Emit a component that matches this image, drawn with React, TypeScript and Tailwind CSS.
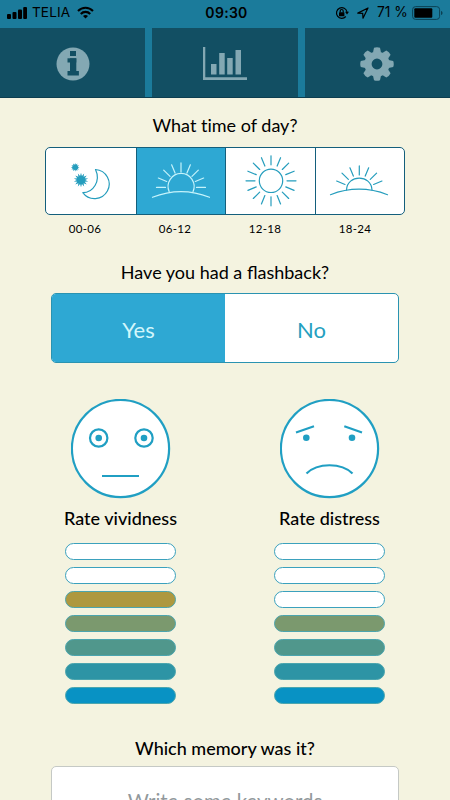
import React, { useState } from 'react';
import clsx from 'clsx';

const times = ['00-06', '06-12', '12-18', '18-24'];

// Fill colours of the rating bars, from the top down
const levels = [
  'bg-[#cf8a2d]',
  'bg-[#c19238]',
  'bg-[#ae983f]',
  'bg-[#7b996e]',
  'bg-[#50978c]',
  'bg-[#2d94a5]',
  'bg-[#0892c4]',
];

const rays = (count: number, step: number, start: number) =>
  Array.from({ length: count }, (_, i) => start + i * step);

const StatusBar = () => (
  <div className="grid h-7 grid-cols-3 items-start pt-[4px] font-['Inter','Liberation_Sans',sans-serif] text-[14px] leading-[17px] text-black">
    <div className="flex items-center pl-[7px]">
      <svg width="20" height="13" viewBox="0 0 20 13">
        <rect x="0" y="8" width="4" height="5" rx="1" />
        <rect x="5.5" y="6" width="4" height="7" rx="1" />
        <rect x="11" y="3.5" width="4" height="9.5" rx="1" />
        <rect x="16.2" y="1" width="3.8" height="12" rx="1" />
      </svg>
      <span className="ml-[5px] w-[39px] text-[13.6px] tracking-[0.1px]">TELIA</span>
      <svg className="ml-[6px]" width="17" height="13" viewBox="0 0 17 13" fill="none" stroke="black" strokeWidth="2.1">
        <path d="M1 5C5.2 .7 11.8 .7 16 5" />
        <path d="M3.8 8C6.4 5.2 10.6 5.2 13.2 8" />
        <path d="M8.5 12.5L6 10C7.4 8.6 9.6 8.6 11 10Z" fill="black" stroke="none" />
      </svg>
    </div>
    <div className="pl-[3px] text-center text-[14px] font-semibold tracking-[0.3px]">09:30</div>
    <div className="flex items-center justify-end pr-[6px]">
      <svg width="14" height="14" viewBox="0 0 14 14" fill="none" stroke="black" strokeWidth="1.2">
        <path d="M10.8 10.5A5.3 5.3 0 1 1 12 6" />
        <path d="M10 5.8h4l-2 2.6z" fill="black" stroke="none" />
        <rect x="4" y="6.2" width="5.4" height="4" rx=".5" fill="black" stroke="none" />
        <path d="M5.2 6.5V5a1.5 1.5 0 0 1 3 0v1.5" />
      </svg>
      <svg className="ml-[8px]" width="12" height="12" viewBox="0 0 12 12" fill="none" stroke="black" strokeWidth="1.2" strokeLinejoin="round">
        <path d="M.8 6.1L11 1L6 11.2L5.7 6.4Z" />
      </svg>
      <span className="ml-[8px] w-[31px] whitespace-nowrap text-[13.8px]">71 %</span>
      <svg className="ml-[4px]" width="32" height="14" viewBox="0 0 32 14">
        <rect x=".6" y=".6" width="27" height="12.8" rx="3" fill="none" stroke="#0b4053" />
        <rect x="2.3" y="2.3" width="18" height="9.4" rx="1" />
        <path d="M29 5c2 .6 2 3.4 0 4z" fill="#0b4053" />
      </svg>
    </div>
  </div>
);

const InfoIcon = () => (
  <svg width="34" height="34" viewBox="0 0 34 34" fill="currentColor">
    <circle cx="17" cy="17" r="16.5" />
    <g fill="#124f63">
      <rect x="14" y="4" width="6" height="5" />
      <rect x="11.5" y="11.3" width="8.8" height="4.2" />
      <rect x="14" y="11.3" width="6.3" height="14" />
      <rect x="11.5" y="24" width="11.4" height="4.5" />
    </g>
  </svg>
);

const ChartIcon = () => (
  <svg width="44" height="33" viewBox="0 0 44 33" fill="currentColor">
    <path d="M0 0h2.3v30.3H44V33H0z" />
    <rect x="8" y="17" width="5.5" height="10.5" />
    <rect x="16.2" y="6" width="5.5" height="21.5" />
    <rect x="24.2" y="11" width="5.5" height="16.5" />
    <rect x="32.5" y="3" width="5.5" height="24.5" />
  </svg>
);

const GearIcon = () => (
  <svg width="34" height="34" viewBox="-17 -17 34 34" fill="currentColor">
    <circle r="9" fill="none" stroke="currentColor" strokeWidth="7.2" />
    {rays(8, 45, 0).map((angle) => (
      <path key={angle} d="M-4 -11.5L-3 -16.2Q0 -17.3 3 -16.2L4 -11.5Z" transform={`rotate(${angle})`} />
    ))}
  </svg>
);

const star = (points: number, outer: number, inner: number) =>
  Array.from({ length: points * 2 }, (_, i) => {
    const r = i % 2 ? inner : outer;
    const a = (i * Math.PI) / points;
    return `${(r * Math.sin(a)).toFixed(2)},${(-r * Math.cos(a)).toFixed(2)}`;
  }).join(' ');

const TimeIcon = ({ index }: { index: number }) => (
  <svg className="shrink-0" width="89" height="66" viewBox="0 0 89 66" fill="none" stroke="currentColor" strokeWidth="1.2" strokeLinecap="round" strokeLinejoin="round">
    {index === 0 && (
      <>
        <polygon points={star(12, 4.3, 2.6)} transform="translate(29.2 19.3)" fill="currentColor" stroke="none" />
        <polygon points={star(14, 7.3, 4.2)} transform="translate(35 32)" fill="currentColor" stroke="none" />
        <path d="M49.5 21.5A14.6 14.6 0 1 1 36.8 44.7C47 44.7 55 33.2 49.5 21.5Z" />
      </>
    )}
    {index === 1 && (
      <>
        <path d="M16.5 49.3Q45 37.8 73.5 49.3" />
        <path d="M33.2 43.7A13 13 0 1 1 57 43.7" />
        {rays(9, 22.5, -90).map((angle) => (
          <path key={angle} d="M0 -15.5V-24.5" transform={`translate(45 39.4) rotate(${angle})`} />
        ))}
      </>
    )}
    {index === 2 && (
      <>
        <circle cx="45" cy="32.8" r="11.7" />
        {rays(16, 22.5, 0).map((angle) => (
          <path key={angle} d="M0 -16V-25" transform={`translate(45 32.8) rotate(${angle})`} />
        ))}
      </>
    )}
    {index === 3 && (
      <>
        <path d="M15.5 46.7Q44 35.7 72.5 46.7" />
        <path d="M31.5 42C32 26.2 56.5 26.2 57 42" />
        {rays(7, 22.5, -67.5).map((angle) => (
          <path key={angle} d="M0 -15.5V-24.5" transform={`translate(44.3 42.4) rotate(${angle})`} />
        ))}
      </>
    )}
  </svg>
);

const VividFace = () => (
  <svg width="100" height="100" viewBox="0 0 100 100" fill="none" stroke="#209fc3" strokeWidth="2.2">
    <circle cx="49.5" cy="49.5" r="48.6" fill="white" />
    <circle cx="27.7" cy="39" r="8.7" />
    <circle cx="73" cy="39" r="8.7" />
    <circle cx="27.7" cy="39" r="3.3" fill="#209fc3" stroke="none" />
    <circle cx="73" cy="39" r="3.3" fill="#209fc3" stroke="none" />
    <path d="M31 77H68" />
  </svg>
);

const SadFace = () => (
  <svg width="100" height="100" viewBox="0 0 100 100" fill="none" stroke="#209fc3" strokeWidth="2.2">
    <circle cx="49.5" cy="49.5" r="48.6" fill="white" />
    <path d="M16 33.5L34 27.2M64.3 27.2L82 33.5" />
    <circle cx="26.3" cy="38.8" r="3.3" fill="#209fc3" stroke="none" />
    <circle cx="72" cy="38.8" r="3.3" fill="#209fc3" stroke="none" />
    <path d="M26.5 74.5C37.5 63.5 61.5 63.5 72.5 74.5" />
  </svg>
);

interface IRating {
  title: string;
  face: React.ReactNode;
  initial: number;
}

const Rating = ({ title, face, initial }: IRating) => {
  const [value, setValue] = useState(initial);

  return (
    <div className="flex w-[112px] flex-col items-center">
      {face}
      <div className="mt-[7px] h-6 whitespace-nowrap text-[18px] leading-6 font-medium">{title}</div>
      <div className="mt-[13px] flex flex-col gap-[7px]">
        {levels.map((color, i) => (
          <button
            key={color}
            onClick={() => setValue(levels.length - i)}
            className={clsx(
              'h-[17px] w-[111px] rounded-full border',
              levels.length - i <= value ? `${color} border-[#4ba5ae]` : 'border-[#3ba1bd] bg-white'
            )}
          />
        ))}
      </div>
    </div>
  );
};

const App = () => {
  const [time, setTime] = useState(1);
  const [flashback, setFlashback] = useState(true);

  return (
    <div className="flex h-[800px] w-[450px] flex-col overflow-hidden bg-[#f4f3e0] font-['Lato','Liberation_Sans',sans-serif] text-black">
      <header className="h-[98px] shrink-0 border-b border-[#0d3e50] bg-[#1b7b9b]">
        <StatusBar />
        {/* Main tabs */}
        <nav className="grid h-[69px] grid-cols-3 gap-[7px] text-[#83a8b3]">
          <button className="flex items-center justify-center bg-[#124f63] pt-[2px]">
            <InfoIcon />
          </button>
          <button className="flex items-center justify-center bg-[#124f63] pt-[2px]">
            <ChartIcon />
          </button>
          <button className="flex items-center justify-center bg-[#124f63] pt-[2px]">
            <GearIcon />
          </button>
        </nav>
      </header>

      <main className="flex flex-col items-center">
        <h2 className="mt-[15px] h-6 text-[18px] leading-6 [font-variant-ligatures:none]">What time of day?</h2>
        <div className="mt-[10px] grid h-[68px] w-[360px] grid-cols-4 overflow-hidden rounded-[5px] border border-[#145f7c] bg-white">
          {times.map((label, i) => (
            <button
              key={label}
              onClick={() => setTime(i)}
              className={clsx(
                'flex items-center justify-center border-[#145f7c]',
                i > 0 && 'border-l',
                i === time ? 'bg-[#2ea8d3] text-[#c5f3fb]' : 'text-[#259dbd]'
              )}
            >
              <TimeIcon index={i} />
            </button>
          ))}
        </div>
        <div className="mt-[6px] mr-[10px] grid h-4 w-[360px] grid-cols-4 text-center text-[11.5px] leading-4 tracking-[0.3px]">
          {times.map((label) => (
            <span key={label}>{label}</span>
          ))}
        </div>

        <h2 className="mt-[23px] h-6 text-[18px] leading-6">Have you had a flashback?</h2>
        <div className="mt-[9px] grid h-[70px] w-[348px] grid-cols-2 overflow-hidden rounded-[5px] border border-[#2a93b1] bg-white text-[22px]">
          <button
            onClick={() => setFlashback(true)}
            className={clsx('pt-[2px]', flashback ? 'bg-[#2ea8d3] text-[#d2f6fb]' : 'text-[#249fc0]')}
          >
            Yes
          </button>
          <button
            onClick={() => setFlashback(false)}
            className={clsx('pt-[2px]', flashback ? 'text-[#249fc0]' : 'bg-[#2ea8d3] text-[#d2f6fb]')}
          >
            No
          </button>
        </div>

        <div className="mt-[36px] flex gap-[97px]">
          <Rating title="Rate vividness" face={<VividFace />} initial={5} />
          <Rating title="Rate distress" face={<SadFace />} initial={4} />
        </div>

        <h2 className="mt-[32px] h-6 text-[18px] leading-6 font-medium">Which memory was it?</h2>
        <input
          className="mt-[6px] h-[70px] w-[348px] rounded-[5px] border border-[#c5c9c5] bg-white text-center text-[20.4px] placeholder:text-[#92999c]"
          placeholder="Write some keywords"
        />
      </main>
    </div>
  );
};

export default App;
